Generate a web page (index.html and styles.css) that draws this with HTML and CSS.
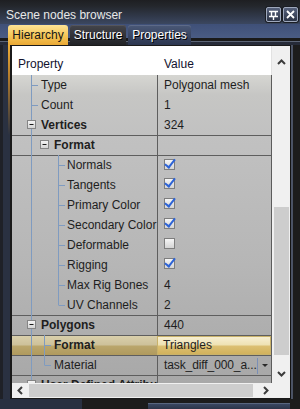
FILE: index.html
```html
<!DOCTYPE html>
<html lang="en">
<head>
    <meta charset="UTF-8">
    <title>Scene nodes browser</title>
    <link rel="stylesheet" href="styles.css">
</head>
<body>
    <div class="titlebar">
        <span class="title">Scene nodes browser</span>
        <div class="title-buttons">
            <span class="tbtn">
                <svg width="13" height="13" viewBox="0 0 13 13">
                    <path d="M2 3.5H11 M4.5 3.5V8 M8.5 3.5V8 M2 8.5H11 M6.5 9V12" stroke="#ffffff" stroke-width="1.4" fill="none"/>
                </svg>
            </span>
            <span class="tbtn">
                <svg width="13" height="13" viewBox="0 0 13 13">
                    <path d="M3 3L10 10 M10 3L3 10" stroke="#ffffff" stroke-width="1.8" fill="none"/>
                </svg>
            </span>
        </div>
    </div>

    <div class="tabstrip">
        <span class="tab active">Hierarchy</span>
        <span class="tab">Structure</span>
        <span class="tab blue">Properties</span>
    </div>

    <div class="frame">
        <div class="edge-left"></div>
        <div class="panel">
            <div class="grid-area">
                <div class="grid">
                    <div class="grid-head">
                        <span class="col-name">Property</span>
                        <span class="col-value">Value</span>
                    </div>
                    <div class="grid-body">
                        <div class="row"><div class="name l1">Type</div><div class="value">Polygonal mesh</div></div>
                        <div class="row"><div class="name l1">Count</div><div class="value">1</div></div>
                        <div class="row"><div class="name l1 bold">Vertices</div><div class="value">324</div></div>
                        <div class="row sep"><div class="name l2 bold">Format</div><div class="value"></div></div>
                        <div class="row sep"><div class="name l3">Normals</div><div class="value"><span class="check on"></span></div></div>
                        <div class="row"><div class="name l3">Tangents</div><div class="value"><span class="check on"></span></div></div>
                        <div class="row"><div class="name l3">Primary Color</div><div class="value"><span class="check on"></span></div></div>
                        <div class="row"><div class="name l3">Secondary Color</div><div class="value"><span class="check on"></span></div></div>
                        <div class="row"><div class="name l3">Deformable</div><div class="value"><span class="check"></span></div></div>
                        <div class="row"><div class="name l3">Rigging</div><div class="value"><span class="check on"></span></div></div>
                        <div class="row"><div class="name l3">Max Rig Bones</div><div class="value">4</div></div>
                        <div class="row"><div class="name l3">UV Channels</div><div class="value">2</div></div>
                        <div class="row sep"><div class="name l1 bold">Polygons</div><div class="value">440</div></div>
                        <div class="row sep selected"><div class="name l2 bold">Format</div><div class="value edit">Triangles</div></div>
                        <div class="row sep"><div class="name l2">Material</div><div class="value combo"><span class="combo-text">task_diff_000_a...</span><span class="drop"></span></div></div>
                        <div class="row sep"><div class="name l1 bold">User Defined Attributes</div><div class="value"></div></div>

                        <!-- tree lines and expand boxes -->
                        <svg class="tree" width="145" height="308" viewBox="0 0 145 308">
                            <path d="M19.5 0V308 M20 10.5H26 M20 30.5H26
                                     M46.5 80V230.5 M47 90.5H53 M47 110.5H53 M47 130.5H53 M47 150.5H53
                                     M47 170.5H53 M47 190.5H53 M47 210.5H53 M47 230.5H53
                                     M32.5 260V290.5 M33 270.5H39 M33 290.5H39"
                                  stroke="#7f9bc0" fill="none"/>
                            <g fill="url(#boxfill)" stroke="#858585">
                                <rect x="15.5" y="45.5" width="8" height="8"/>
                                <rect x="28.5" y="65.5" width="8" height="8"/>
                                <rect x="15.5" y="245.5" width="8" height="8"/>
                                <rect x="15.5" y="305.5" width="8" height="8"/>
                            </g>
                            <path d="M17.5 49.5H21.5 M30.5 69.5H34.5 M17.5 249.5H21.5" stroke="#1a1a1a" fill="none"/>
                            <defs>
                                <linearGradient id="boxfill" x1="0" y1="0" x2="0" y2="1">
                                    <stop offset="0" stop-color="#f6f6f6"/>
                                    <stop offset="1" stop-color="#d2d2d2"/>
                                </linearGradient>
                            </defs>
                        </svg>
                    </div>
                </div>
                <div class="vscroll">
                    <svg class="arrow-up" width="9" height="6" viewBox="0 0 9 6">
                        <path d="M1 5L4.5 1.5L8 5" stroke="#3c3c3c" stroke-width="2" fill="none"/>
                    </svg>
                    <div class="vthumb"></div>
                    <svg class="arrow-down" width="9" height="6" viewBox="0 0 9 6">
                        <path d="M1 1L4.5 4.5L8 1" stroke="#3c3c3c" stroke-width="2" fill="none"/>
                    </svg>
                </div>
            </div>
            <div class="hscroll">
                <svg class="arrow-left" width="6" height="9" viewBox="0 0 6 9">
                    <path d="M5 1L1.5 4.5L5 8" stroke="#3c3c3c" stroke-width="2" fill="none"/>
                </svg>
                <div class="hthumb"></div>
                <svg class="arrow-right" width="6" height="9" viewBox="0 0 6 9">
                    <path d="M1 1L4.5 4.5L1 8" stroke="#3c3c3c" stroke-width="2" fill="none"/>
                </svg>
            </div>
        </div>
        <div class="edge-right"></div>
    </div>

    <div class="footer">
        <div class="foot-left"></div>
        <div class="foot-gap"></div>
        <div class="foot-band"></div>
    </div>
</body>
</html>
```

FILE: styles.css
```css
* {
    box-sizing: border-box;
}

html, body {
    margin: 0;
    padding: 0;
}

body {
    width: 300px;
    height: 409px;
    overflow: hidden;
    background-color: #1c1c1c;
    font-family: "Liberation Sans", Arial, sans-serif;
    font-size: 12px;
}

/* Title bar */
.titlebar {
    height: 24px;
    display: flex;
    align-items: flex-end;
    justify-content: space-between;
    padding: 0 2px 2px 6px;
    background: linear-gradient(#1e1f22 0, #24272c 6px, #303849 16px, #3b4760 24px);
}

.title {
    color: #e8e8e8;
    line-height: 14px;
}

.title-buttons {
    display: flex;
    gap: 2px;
}

.tbtn {
    width: 15px;
    height: 15px;
    display: flex;
    align-items: center;
    justify-content: center;
    border: 1px solid #9ea8bc;
    border-radius: 2px;
    background: linear-gradient(#56617c, #2c3446);
    box-shadow: 0 0 0 1px #1a1d24;
}

/* Tabs */
.tabstrip {
    height: 21px;
    display: flex;
    gap: 2px;
    padding: 1px 0 0 8px;
    background: linear-gradient(#3f5078 0, #4a5c84 14px, #1a1a1a 14px, #1a1a1a 17px, #5c6576 17px, #5c6576 18px, #262b38 18px);
}

.tab {
    height: 20px;
    line-height: 20px;
    text-align: center;
    color: #ffffff;
    text-shadow: 1px 1px 0 #000000;
    border-radius: 3px 3px 0 0;
    background: linear-gradient(#44454b, #222327);
    box-shadow: inset 0 1px 0 #55565c;
}

.tab.active {
    width: 60px;
    color: #151515;
    text-shadow: none;
    background: linear-gradient(#fde396, #f6c85a 50%, #eaa935);
    box-shadow: none;
}

.tab:nth-child(2) {
    width: 56px;
}

.tab.blue {
    width: 63px;
    background: linear-gradient(#4a5877, #2c3650);
    box-shadow: inset 0 1px 0 #5d6a88;
}

/* Frame around the grid */
.frame {
    height: 354px;
    display: flex;
}

.edge-left {
    width: 12px;
    background:
        linear-gradient(to right, #1f2127 0, #1f2127 3px, #2a3141 3px, #2a3141 8px, transparent 8px, transparent 10px, #1a1a1a 10px),
        linear-gradient(#eeae38 0, #b77f2c 30px, #2a3141 90px);
}

.edge-right {
    width: 10px;
    background: linear-gradient(to right, #141414 0, #141414 1px, #4b5365 1px, #4b5365 3px, #1c1c1c 3px);
}

.panel {
    width: 278px;
    border-top: 1px solid #1a1a1a;
    border-bottom: 1px solid #1a1a1a;
    background-color: #f0f0f0;
}

.grid-area {
    height: 337px;
    display: flex;
}

.grid {
    width: 260px;
}

.grid-head {
    height: 29px;
    display: flex;
    background-color: #ffffff;
    color: #12122e;
    line-height: 16px;
    padding-top: 10px;
    border-right: 1px solid #e2e2e2;
}

.col-name {
    width: 145px;
    padding-left: 6px;
}

.col-value {
    padding-left: 7px;
}

.grid-body {
    position: relative;
    height: 308px;
    overflow: hidden;
    border-right: 1px solid #5c5c5c;
    background: linear-gradient(#d6d6d2 0, #c6c6c4 20px, #c1c1c1 60px, #b6b6b6 190px, #a8a8a8 308px);
    color: #1e1e1e;
}

.row {
    height: 20px;
    display: flex;
    line-height: 20px;
}

.row.sep {
    border-top: 1px solid #5e5e5e;
    line-height: 19px;
}

.name {
    width: 145px;
    white-space: nowrap;
    overflow: hidden;
}

.l1 { padding-left: 29px; }
.l2 { padding-left: 42px; }
.l3 { padding-left: 55px; }

.bold {
    font-weight: bold;
}

.value {
    flex: 1;
    display: flex;
    align-items: center;
    padding-left: 6px;
    border-left: 1px solid #5e5e5e;
    white-space: nowrap;
    overflow: hidden;
}

.row.selected .name {
    background: linear-gradient(#d9cfab, #cdc19a 48%, #baa66c 52%, #b09a5e);
}

.value.edit {
    padding-left: 5px;
    border: 1px solid #c9b26a;
    background: linear-gradient(#f7efd2, #eee1b2 48%, #dcc073 52%, #d2b25c);
}

.combo-text {
    flex: 1;
    letter-spacing: -0.1px;
}

.drop {
    width: 14px;
    height: 16px;
    display: flex;
    align-items: center;
    justify-content: center;
    border-left: 1px solid #7b8fb6;
}

.drop::after {
    content: "";
    border-left: 3px solid transparent;
    border-right: 3px solid transparent;
    border-top: 3px solid #2a2a2a;
}

.check {
    position: relative;
    width: 11px;
    height: 11px;
    margin-bottom: 3px;
    border: 1px solid #7e7e7e;
    background: linear-gradient(#f6f6f6, #d4d4d4);
}

.check.on::after {
    content: "";
    position: absolute;
    left: 2px;
    top: -3px;
    width: 4px;
    height: 9px;
    border-right: 2px solid #2d63d6;
    border-bottom: 2px solid #2d63d6;
    transform: rotate(38deg);
}

.tree {
    position: absolute;
    top: 0;
    left: 0;
}

/* Scrollbars */
.vscroll {
    width: 18px;
    display: flex;
    flex-direction: column;
    align-items: center;
    background-color: #f0f0f0;
}

.arrow-up {
    margin-top: 13px;
}

.vthumb {
    width: 15px;
    height: 148px;
    margin: 142px 0 0 1px;
    background-color: #cdcdcd;
}

.arrow-down {
    margin-top: 16px;
}

.hscroll {
    height: 15px;
    display: flex;
    align-items: center;
    background-color: #f0f0f0;
}

.arrow-left {
    margin-left: 5px;
}

.hthumb {
    width: 224px;
    height: 13px;
    margin-left: 6px;
    background-color: #cdcdcd;
}

.arrow-right {
    margin-left: 10px;
}

/* Bottom strip */
.footer {
    height: 10px;
    display: flex;
}

.foot-left {
    width: 82px;
    background-color: #283041;
}

.foot-gap {
    width: 66px;
}

.foot-band {
    width: 142px;
    margin-top: 4px;
    border-top: 1px solid #59667f;
    background: linear-gradient(#3a4762, #2c3549);
}
```
